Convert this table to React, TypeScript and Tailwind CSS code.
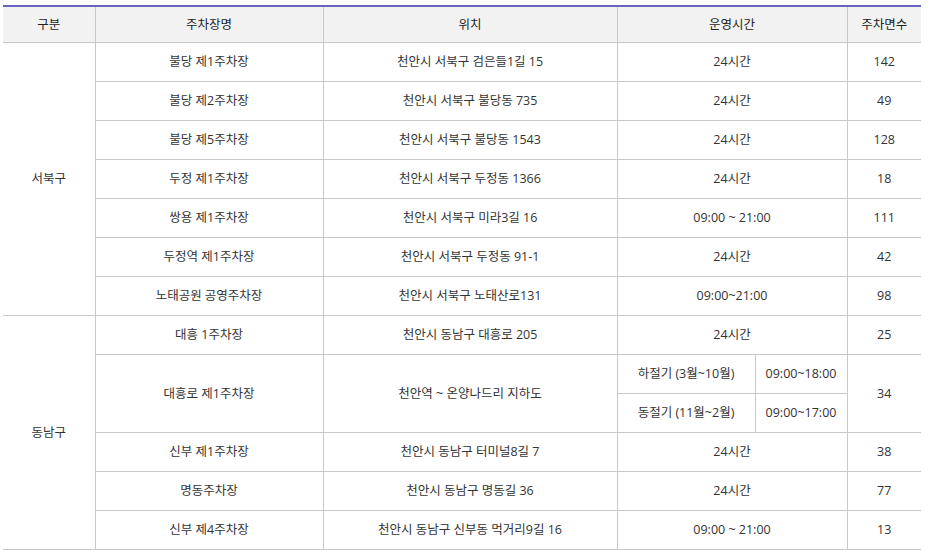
import React from 'react';

type Row = {
  name: string;
  addr: string;
  time?: string;
  count: string;
  seasons?: { label: string; hours: string }[];
};

const seobuk: Row[] = [
  { name: '불당 제1주차장', addr: '천안시 서북구 검은들1길 15', time: '24시간', count: '142' },
  { name: '불당 제2주차장', addr: '천안시 서북구 불당동 735', time: '24시간', count: '49' },
  { name: '불당 제5주차장', addr: '천안시 서북구 불당동 1543', time: '24시간', count: '128' },
  { name: '두정 제1주차장', addr: '천안시 서북구 두정동 1366', time: '24시간', count: '18' },
  { name: '쌍용 제1주차장', addr: '천안시 서북구 미라3길 16', time: '09:00 ~ 21:00', count: '111' },
  { name: '두정역 제1주차장', addr: '천안시 서북구 두정동 91-1', time: '24시간', count: '42' },
  { name: '노태공원 공영주차장', addr: '천안시 서북구 노태산로131', time: '09:00~21:00', count: '98' },
];

const dongnam: Row[] = [
  { name: '대흥 1주차장', addr: '천안시 동남구 대흥로 205', time: '24시간', count: '25' },
  {
    name: '대흥로 제1주차장',
    addr: '천안역 ~ 온양나드리 지하도',
    count: '34',
    seasons: [
      { label: '하절기 (3월~10월)', hours: '09:00~18:00' },
      { label: '동절기 (11월~2월)', hours: '09:00~17:00' },
    ],
  },
  { name: '신부 제1주차장', addr: '천안시 동남구 터미널8길 7', time: '24시간', count: '38' },
  { name: '명동주차장', addr: '천안시 동남구 명동길 36', time: '24시간', count: '77' },
  { name: '신부 제4주차장', addr: '천안시 동남구 신부동 먹거리9길 16', time: '09:00 ~ 21:00', count: '13' },
];

const td = 'h-[39px] p-0 pt-[2px] text-center align-middle border-b border-r border-[#c8c8c8]';
const tdLast = 'h-[39px] p-0 pt-[2px] text-center align-middle border-b border-[#c8c8c8]';
const th = 'h-[36px] p-0 pt-[1px] font-normal text-[#222] border-b border-[#c8c8c8]';

function Group({ label, rows }: { label: string; rows: Row[] }) {
  const span = rows.reduce((n, r) => n + (r.seasons ? r.seasons.length : 1), 0);
  const out: React.ReactNode[] = [];
  rows.forEach((r, i) => {
    const first = i === 0;
    if (r.seasons) {
      const n = r.seasons.length;
      r.seasons.forEach((s, j) => {
        out.push(
          <tr key={`${r.name}-${j}`}>
            {first && j === 0 && (
              <td rowSpan={span} className={td}>
                {label}
              </td>
            )}
            {j === 0 && (
              <>
                <td rowSpan={n} className={td}>
                  {r.name}
                </td>
                <td rowSpan={n} className={td}>
                  {r.addr}
                </td>
              </>
            )}
            <td className={td}>{s.label}</td>
            <td className={td}>{s.hours}</td>
            {j === 0 && (
              <td rowSpan={n} className={tdLast}>
                {r.count}
              </td>
            )}
          </tr>
        );
      });
    } else {
      out.push(
        <tr key={r.name}>
          {first && (
            <td rowSpan={span} className={td}>
              {label}
            </td>
          )}
          <td className={td}>{r.name}</td>
          <td className={td}>{r.addr}</td>
          <td colSpan={2} className={td}>
            {r.time}
          </td>
          <td className={tdLast}>{r.count}</td>
        </tr>
      );
    }
  });
  return <>{out}</>;
}

export default function App() {
  return (
    <div
      className="w-[930px] h-[555px] bg-white pt-[5px] pl-[3px] overflow-hidden"
      style={{ fontFamily: '"Open Sans", "Noto Sans CJK KR", sans-serif' }}
    >
      <table className="w-[918px] border-collapse table-fixed text-[12.5px] text-[#333] leading-none">
        <colgroup>
          <col className="w-[92px]" />
          <col className="w-[228px]" />
          <col className="w-[294px]" />
          <col className="w-[138px]" />
          <col className="w-[92px]" />
          <col className="w-[74px]" />
        </colgroup>
        <thead>
          <tr className="bg-[#f2f2f2] border-t-2 border-[#6a62c0]">
            <th className={`${th} border-r`}>구분</th>
            <th className={`${th} border-r`}>주차장명</th>
            <th className={`${th} border-r`}>위치</th>
            <th colSpan={2} className={`${th} border-r`}>
              운영시간
            </th>
            <th className={th}>주차면수</th>
          </tr>
        </thead>
        <tbody>
          <Group label="서북구" rows={seobuk} />
          <Group label="동남구" rows={dongnam} />
        </tbody>
      </table>
    </div>
  );
}
